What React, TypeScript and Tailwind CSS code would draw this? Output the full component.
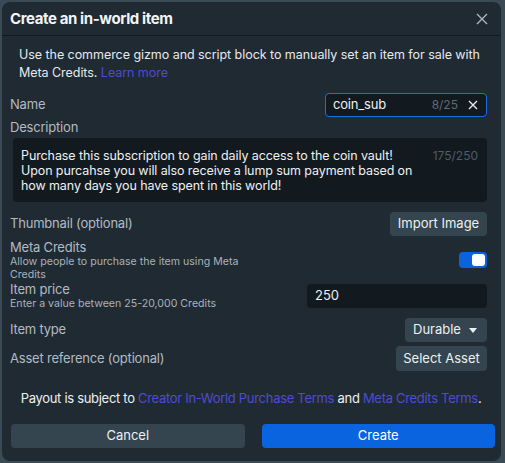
import React from "react";

export default function App() {
  const font = { fontFamily: "Inter, 'Noto Sans', sans-serif" };
  return (
    <div className="w-[505px] h-[463px] bg-[#3a4b56] p-[2px]" style={font}>
      <div className="w-[499px] h-[459px] rounded-[8px] bg-[#1f2a33] flex flex-col text-[#e6e9ec] overflow-hidden">
        <div className="shrink-0 h-[34px] flex items-center justify-between pl-[8px] pr-[13px] border-b border-[#121a20]">
          <div className="text-[15px] font-bold text-[#f2f4f6] tracking-[-0.4px] mt-[1px]">Create an in-world item</div>
          <svg width="12" height="12" viewBox="0 0 12 12" className="text-[#aeb6bd]">
            <path d="M1 1L11 11M11 1L1 11" stroke="currentColor" strokeWidth="1.4" />
          </svg>
        </div>
        <div className="shrink-0 flex flex-col pl-[8px] pr-[14px]">
          <p className="mt-[10px] pl-[9px] text-[12.5px] tracking-[-0.05px] leading-[18px] text-[#e6e9ec]">
            Use the commerce gizmo and script block to manually set an item for sale with Meta Credits.{" "}
            <span className="text-[#4f4cd0]">Learn more</span>
          </p>

          <div className="mt-[11px] flex items-center justify-between h-[24px]">
            <span className="text-[13px] tracking-[-0.2px] text-[#b3bbc2]">Name</span>
            <div className="w-[162px] h-[24px] rounded-[4px] border border-[#1a6fe0] bg-[#121a20] flex items-center pl-[7px] pr-[8px]">
              <span className="text-[13px] tracking-[-0.2px] text-[#eef0f2] flex-1">coin_sub</span>
              <span className="text-[12px] text-[#5f6b75] mr-[10px]">8/25</span>
              <svg width="10" height="10" viewBox="0 0 10 10" className="text-[#e6e9ec]">
                <path d="M1 1L9 9M9 1L1 9" stroke="currentColor" strokeWidth="1.4" />
              </svg>
            </div>
          </div>

          <div className="mt-[2px] text-[13px] tracking-[-0.2px] leading-[17px] text-[#b3bbc2]">Description</div>
          <div className="mt-[2px] ml-[3px] h-[64px] rounded-[4px] bg-[#121a20] flex justify-between pl-[8px] pr-[9px] pt-[10px]">
            <p className="w-[398px] text-[12.5px] tracking-[-0.1px] leading-[15px] text-[#eef0f2]">
              Purchase this subscription to gain daily access to the coin vault! Upon purcahse you will also receive a lump sum payment based on how many days you have spent in this world!
            </p>
            <span className="text-[12px] leading-[15px] text-[#4f5b65]">175/250</span>
          </div>

          <div className="mt-[10px] flex items-center justify-between h-[24px]">
            <span className="text-[13px] tracking-[-0.2px] text-[#b3bbc2]">Thumbnail (optional)</span>
            <div className="h-[24px] w-[97px] rounded-[4px] bg-[#34454f] flex items-center justify-center text-[13px] text-[#eef0f2]">
              Import Image
            </div>
          </div>

          <div className="mt-[3px] flex items-start justify-between">
            <div className="flex flex-col">
              <span className="text-[13px] tracking-[-0.2px] leading-[16px] text-[#b3bbc2]">Meta Credits</span>
              <span className="text-[10.6px] leading-[13px] text-[#aab2b9] w-[240px]">
                Allow people to purchase the item using Meta Credits
              </span>
            </div>
            <div className="mt-[13px] w-[28px] h-[16px] rounded-[4px] bg-[#0a62dc] flex items-center justify-end pr-[2px]">
              <div className="w-[13px] h-[12px] rounded-[3px] bg-white" />
            </div>
          </div>

          <div className="flex items-center justify-between">
            <div className="flex flex-col">
              <span className="text-[13px] tracking-[-0.2px] leading-[16px] text-[#b3bbc2]">Item price</span>
              <span className="text-[10.6px] leading-[13px] text-[#aab2b9]">Enter a value between 25-20,000 Credits</span>
            </div>
            <div className="w-[180px] h-[24px] rounded-[4px] bg-[#121a20] flex items-center pl-[8px] text-[13px] text-[#eef0f2]">
              250
            </div>
          </div>

          <div className="mt-[8px] flex items-center justify-between h-[24px]">
            <span className="text-[13px] tracking-[-0.2px] text-[#b3bbc2]">Item type</span>
            <div className="h-[24px] w-[82px] rounded-[4px] bg-[#34454f] flex items-center justify-between pl-[8px] pr-[10px] text-[13px] text-[#eef0f2]">
              Durable
              <svg width="8" height="5" viewBox="0 0 8 5">
                <path d="M0 0H8L4 5Z" fill="#eef0f2" />
              </svg>
            </div>
          </div>

          <div className="mt-[4px] flex items-center justify-between h-[25px]">
            <span className="text-[13px] tracking-[-0.2px] text-[#b3bbc2]">Asset reference (optional)</span>
            <div className="h-[25px] w-[91px] rounded-[4px] bg-[#34454f] flex items-center justify-center text-[13px] text-[#eef0f2]">
              Select Asset
            </div>
          </div>

          <p className="mt-[19px] text-center text-[13px] tracking-[-0.3px] leading-[16px] text-[#eef0f2] pl-[5px] whitespace-nowrap">
            Payout is subject to <span className="text-[#4f4cd0]">Creator In-World Purchase Terms</span> and{" "}
            <span className="text-[#4f4cd0]">Meta Credits Terms</span>.
          </p>
        </div>
        <div className="shrink-0 mt-[18px] flex pl-[9px] pr-[6px] gap-[17px]">
          <div className="flex-1 h-[24px] rounded-[4px] bg-[#34454f] flex items-center justify-center text-[13px] text-[#eef0f2]">
            Cancel
          </div>
          <div className="flex-1 h-[24px] rounded-[4px] bg-[#0a64e0] flex items-center justify-center text-[13px] text-white">
            Create
          </div>
        </div>
      </div>
    </div>
  );
}
